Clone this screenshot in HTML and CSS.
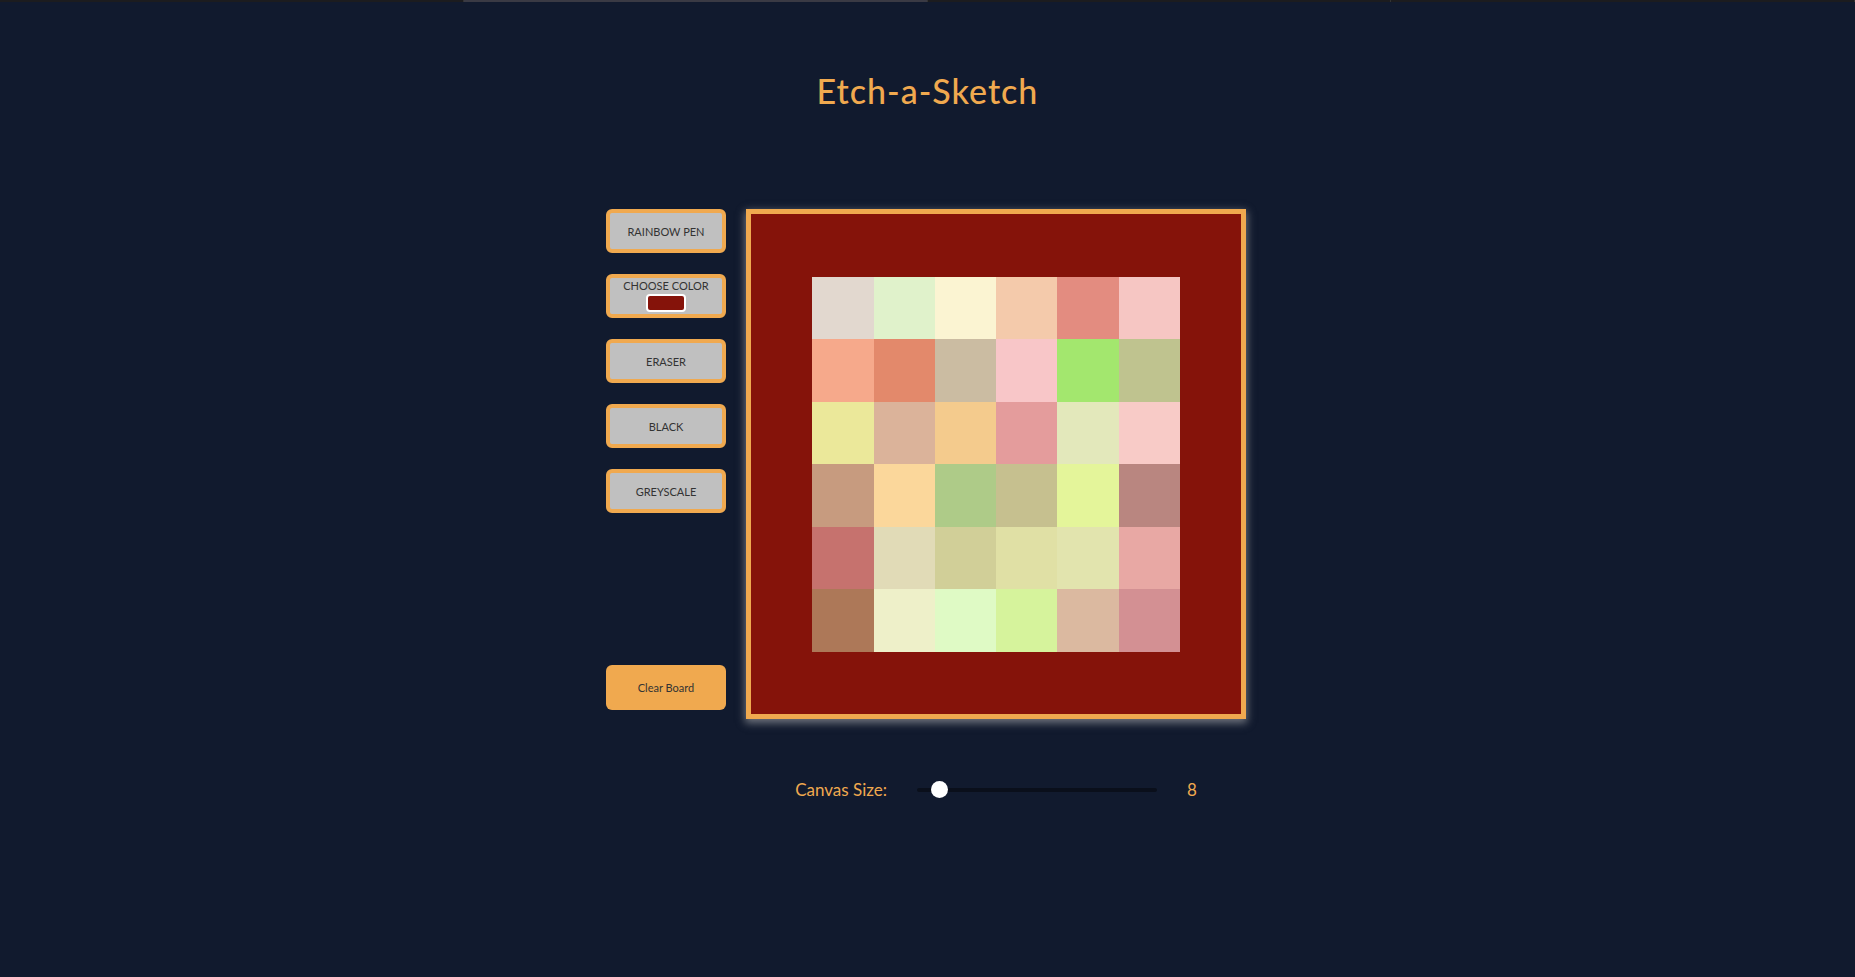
FILE: index.html
```html
<!DOCTYPE html>
<html lang="en">
<head>
<meta charset="utf-8">
<title>Etch-a-Sketch</title>
<link rel="stylesheet" href="styles.css">
</head>
<body>
<div class="topbar">
  <span class="seg"></span><span class="seg seg-active"></span><span class="seg"></span><span class="seg"></span>
</div>
<h1 class="title">Etch-a-Sketch</h1>
<main class="main">
  <div class="tools">
    <button class="tool">RAINBOW PEN</button>
    <button class="tool tool-color">CHOOSE COLOR<span class="swatch"></span></button>
    <button class="tool">ERASER</button>
    <button class="tool">BLACK</button>
    <button class="tool">GREYSCALE</button>
    <button class="clear">Clear Board</button>
  </div>
  <div class="right">
    <div class="board">
      <div class="grid" id="grid"></div>
    </div>
    <div class="size-row">
      <label class="size-label" for="size">Canvas Size:</label>
      <input class="slider" id="size" type="range" min="2" max="100" value="8">
      <span class="size-value">8</span>
    </div>
  </div>
</main>
<script>
  var colors = [
    ["#e2d8cf","#e0f2cb","#fbf4d2","#f4caab","#e38c80","#f6c6c3"],
    ["#f6a98b","#e3896b","#cbbca2","#f8c6c8","#a3e76e","#bfc38f"],
    ["#ebe89a","#dbb39a","#f4cb8d","#e49c9c","#e3e8bb","#f8cbc7"],
    ["#c79b7f","#fbd79b","#aecb88","#c6c08f","#e4f59a","#b98680"],
    ["#c6726e","#e1dbb7","#d1cf98","#e0e0a5","#e2e4ae","#e8a8a4"],
    ["#ad7858","#eef0c9","#dffac5","#d6f39c","#dbb9a0","#d39093"]
  ];
  var grid = document.getElementById("grid");
  for (var r = 0; r < 8; r++) {
    for (var c = 0; c < 8; c++) {
      var cell = document.createElement("div");
      cell.className = "cell";
      if (r > 0 && r < 7 && c > 0 && c < 7) {
        cell.style.background = colors[r - 1][c - 1];
      }
      grid.appendChild(cell);
    }
  }
</script>
</body>
</html>
```
FILE: styles.css
```css
* { box-sizing: border-box; }
html, body { margin: 0; height: 100%; }
body {
  background: #111a2e;
  font-family: "Lato", "Noto Sans", sans-serif;
  overflow: hidden;
}
.topbar {
  display: flex;
  height: 2px;
  background: #1c1c1f;
}
.seg { flex: 1; border-right: 1px solid #333; }
.seg-active { background: #3a3a44; }
.title {
  margin: 0;
  margin-top: -2px;
  padding-top: 71px;
  height: 209px;
  text-align: center;
  font-size: 34px;
  font-weight: 500;
  letter-spacing: 1px;
  color: #f0a94f;
  line-height: 40px;
}
.main {
  display: flex;
  justify-content: center;
  align-items: flex-start;
  gap: 20px;
  padding-right: 3px;
}
.tools {
  width: 120px;
  height: 510px;
  display: flex;
  flex-direction: column;
  gap: 21px;
  padding-bottom: 9px;
}
.tool {
  width: 120px;
  height: 44px;
  flex: none;
  border: 4px solid #f0a94f;
  border-radius: 6px;
  background: #c0c0c0;
  color: #333;
  font-family: inherit;
  font-size: 11px;
  padding: 0;
}
.tool-color {
  display: flex;
  flex-direction: column;
  align-items: center;
  justify-content: flex-start;
  padding-top: 1px;
  line-height: 13px;
}
.swatch {
  display: block;
  width: 40px;
  height: 18px;
  margin-top: 2px;
  border: 2px solid #fff;
  border-radius: 4px;
  background: #85130a;
}
.clear {
  margin-top: auto;
  width: 120px;
  height: 45px;
  flex: none;
  border: none;
  border-radius: 6px;
  background: #f0a94f;
  color: #333;
  font-family: inherit;
  font-size: 11px;
}
.right {
  width: 500px;
  display: flex;
  flex-direction: column;
}
.board {
  width: 500px;
  height: 510px;
  border: 5px solid #f0a94f;
  background: #85130a;
  box-shadow: 0 3px 8px 1px rgba(190, 190, 190, 0.55);
}
.grid {
  width: 100%;
  height: 100%;
  display: grid;
  grid-template-columns: repeat(8, 1fr);
  grid-template-rows: repeat(8, 1fr);
}
.size-row {
  display: flex;
  align-items: center;
  justify-content: center;
  gap: 30px;
  margin-top: 60px;
  color: #f0a94f;
  font-size: 17px;
}
.slider {
  -webkit-appearance: none;
  appearance: none;
  width: 240px;
  height: 4px;
  margin: 0;
  border-radius: 2px;
  background: #0a0f1b;
  outline: none;
}
.slider::-webkit-slider-thumb {
  -webkit-appearance: none;
  appearance: none;
  width: 17px;
  height: 17px;
  border-radius: 50%;
  background: #fff;
  border: none;
}
```
